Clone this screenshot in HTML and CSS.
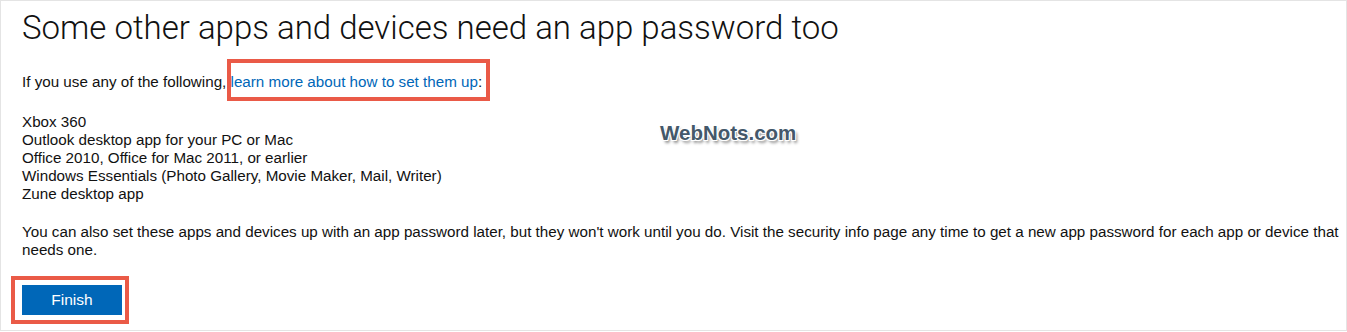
FILE: index.html
```html
<!DOCTYPE html>
<html lang="en">
<head>
<meta charset="utf-8">
<title>App password</title>
<link rel="stylesheet" href="styles.css">
</head>
<body>
<div class="frame">
  <h1 class="title">Some other apps and devices need an app password too</h1>
  <p class="intro">If you use any of the following, <span class="mark mark-link"><a class="link" href="#">learn more about how to set them up</a>:</span></p>
  <ul class="apps">
    <li>Xbox 360</li>
    <li>Outlook desktop app for your PC or Mac</li>
    <li>Office 2010, Office for Mac 2011, or earlier</li>
    <li>Windows Essentials (Photo Gallery, Movie Maker, Mail, Writer)</li>
    <li>Zune desktop app</li>
  </ul>
  <p class="note">You can also set these apps and devices up with an app password later, but they won't work until you do. Visit the security info page any time to get a new app password for each app or device that needs one.</p>
  <div class="actions">
    <span class="mark mark-btn"><button class="finish" type="button">Finish</button></span>
  </div>
  <div class="watermark">WebNots.com</div>
</div>
</body>
</html>
```

FILE: styles.css
```css
* { box-sizing: border-box; }
html, body { margin: 0; padding: 0; background: #fff; }
body {
  font-family: "Liberation Sans", Arial, sans-serif;
  color: #111;
}
.frame {
  position: relative;
  width: 1347px;
  height: 331px;
  border: 1px solid #e4e4e4;
  padding: 7px 0 0 21px;
}
.title {
  margin: 0;
  font-family: Roboto, "Liberation Sans", sans-serif;
  font-weight: 300;
  font-size: 33px;
  line-height: 40px;
  color: #111;
}
.intro {
  margin: 25px 0 0;
  font-size: 15.2px;
  line-height: 18px;
}
.link {
  color: #0067b8;
  text-decoration: none;
}
.mark { position: relative; }
.mark::after {
  content: "";
  position: absolute;
  border: 4px solid #ea5a47;
  pointer-events: none;
}
.mark-link::after { top: -14px; bottom: -11px; left: -4px; right: -8px; }
.apps {
  list-style: none;
  margin: 22px 0 0;
  padding: 0;
  font-size: 15.2px;
  line-height: 18px;
}
.note {
  margin: 20px 0 0;
  padding-right: 4px;
  font-size: 15.2px;
  line-height: 18px;
}
.actions {
  margin-top: 26px;
  display: flex;
}
.mark-btn { display: inline-block; }
.mark-btn::after { top: -9px; bottom: -9px; left: -11px; right: -7px; }
.finish {
  display: block;
  width: 100px;
  height: 30px;
  border: 0;
  background: #0067b8;
  color: #fff;
  font-family: "Liberation Sans", Arial, sans-serif;
  font-size: 15.5px;
  padding: 0;
}
.watermark {
  position: absolute;
  left: 659px;
  top: 120px;
  font-family: "Liberation Sans", Arial, sans-serif;
  font-weight: 700;
  font-size: 20.5px;
  color: #44586a;
  text-shadow: -1px -1px 0 #fff, 1px -1px 0 #fff, -1px 1px 0 #fff, 1px 1px 0 #fff, 2px 3px 3px rgba(0,0,0,0.45);
}
```
